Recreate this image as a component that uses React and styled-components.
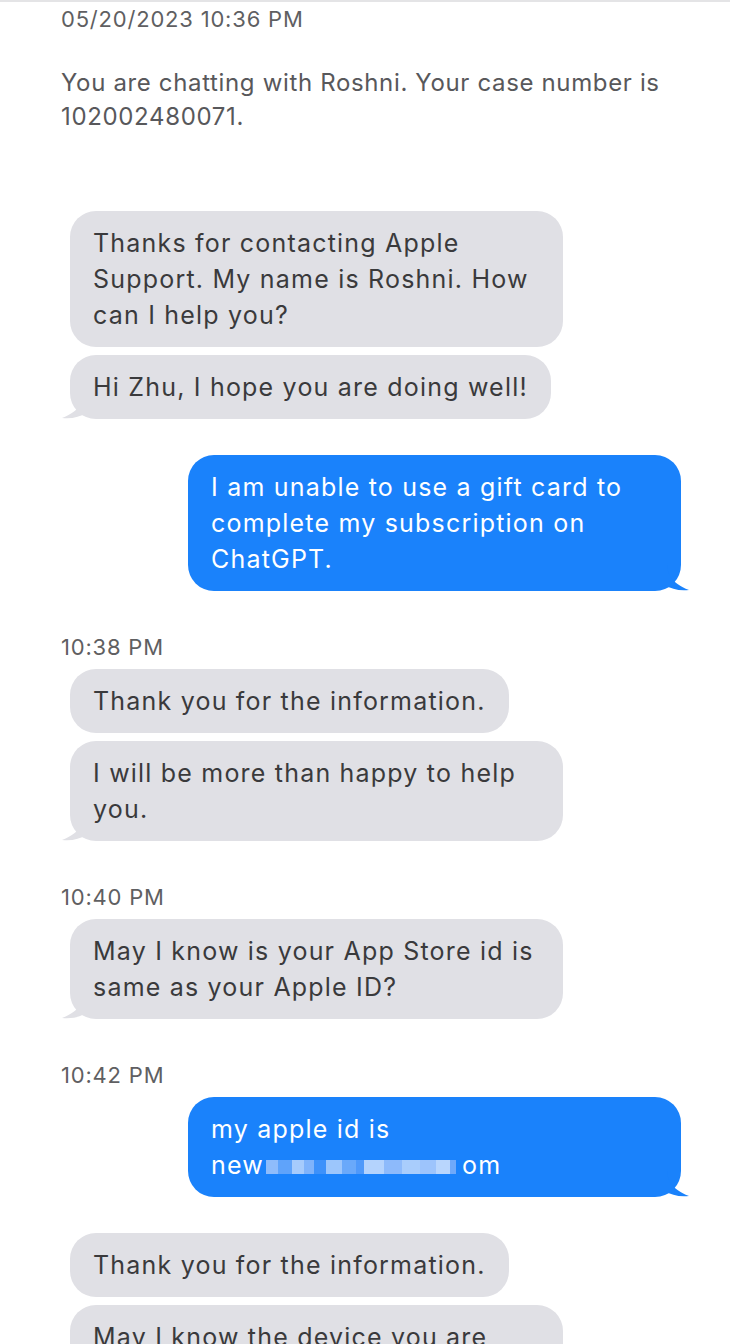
import React from "react";
import styled, { createGlobalStyle } from "styled-components";

const GlobalStyle = createGlobalStyle`
  html, body {
    margin: 0;
    padding: 0;
    background: #ffffff;
  }
  body {
    font-family: "Inter", "Noto Sans", sans-serif;
    -webkit-font-smoothing: antialiased;
  }
`;

const mosaic = [
  ["#8fbcfb", 12],
  ["#5fa3fa", 14],
  ["#a6cbfc", 12],
  ["#7fb3fb", 10],
  ["#3d91fa", 12],
  ["#9cc6fc", 16],
  ["#6aa9fa", 14],
  ["#4f99fa", 8],
  ["#b4d3fd", 20],
  ["#8dbafb", 18],
  ["#a9cdfc", 18],
  ["#9dc4fc", 16],
  ["#b9d6fd", 14],
  ["#6fa9fa", 6],
];

function GreyTail() {
  return (
    <TailIn width="30" height="28" viewBox="0 0 30 28">
      <path
        d="M24 0 C24 10 20 20 2 27 C12 28 20 26 26 22 C28 23 30 24 30 24 L30 0 Z"
        fill="#e0e0e5"
      />
    </TailIn>
  );
}

function BlueTail() {
  return (
    <TailOut width="30" height="28" viewBox="0 0 30 28">
      <path
        d="M6 0 C6 10 10 20 28 27 C18 28 10 26 4 22 C2 23 0 24 0 24 L0 0 Z"
        fill="#1a82fb"
      />
    </TailOut>
  );
}

export default function App() {
  return (
    <>
      <GlobalStyle />
      <Page>
        <Intro>
          <Stamp>05/20/2023 10:36 PM</Stamp>
          <CaseNote>
            You are chatting with Roshni. Your case number is 102002480071.
          </CaseNote>
        </Intro>

        <Group>
          <Bubble>
            Thanks for contacting Apple Support. My name is Roshni. How can I
            help you?
          </Bubble>
          <Bubble>
            Hi Zhu, I hope you are doing well!
            <GreyTail />
          </Bubble>
        </Group>

        <Group $top={36}>
          <Bubble $out>
            I am unable to use a gift card to complete my subscription on
            ChatGPT.
            <BlueTail />
          </Bubble>
        </Group>

        <Group $top={44}>
          <Stamp>10:38 PM</Stamp>
          <Bubble>Thank you for the information.</Bubble>
          <Bubble>
            I will be more than happy to help you.
            <GreyTail />
          </Bubble>
        </Group>

        <Group $top={44}>
          <Stamp>10:40 PM</Stamp>
          <Bubble>
            May I know is your App Store id is same as your Apple ID?
            <GreyTail />
          </Bubble>
        </Group>

        <Group $top={44}>
          <Stamp>10:42 PM</Stamp>
          <Bubble $out $wide>
            my apple id is
            <br />
            new
            <Mosaic>
              {mosaic.map(([c, w], i) => (
                <Tile key={i} style={{ background: c, width: w }} />
              ))}
            </Mosaic>
            om
            <BlueTail />
          </Bubble>
        </Group>

        <Group $top={36}>
          <Bubble>Thank you for the information.</Bubble>
          <Bubble>May I know the device you are using?</Bubble>
        </Group>
      </Page>
    </>
  );
}

const Page = styled.div`
  width: 730px;
  height: 1344px;
  overflow: hidden;
  border-top: 2px solid #e4e4e6;
  box-sizing: border-box;
  padding: 3px 50px 0 61px;
  display: flex;
  flex-direction: column;
`;

const Intro = styled.div`
  display: flex;
  flex-direction: column;
  gap: 33px;
  margin-bottom: 77px;
`;

const Stamp = styled.div`
  font-size: 22px;
  line-height: 28px;
  letter-spacing: 0.8px;
  color: #5f5f62;
`;

const CaseNote = styled.div`
  font-size: 24px;
  line-height: 34px;
  letter-spacing: 0.65px;
  color: #58585b;
  max-width: 610px;
`;

const Group = styled.div`
  display: flex;
  flex-direction: column;
  gap: 8px;
  margin-top: ${(p) => p.$top || 0}px;
  ${Stamp} {
    margin-top: -2px;
    margin-bottom: 0;
  }
`;

const Bubble = styled.div`
  position: relative;
  box-sizing: border-box;
  max-width: 493px;
  width: ${(p) => (p.$wide ? "493px" : "auto")};
  margin-left: ${(p) => (p.$out ? "0" : "9px")};
  margin-right: ${(p) => (p.$out ? "-1px" : "0")};
  align-self: ${(p) => (p.$out ? "flex-end" : "flex-start")};
  padding: 14px 23px;
  border-radius: 26px;
  font-size: 25px;
  line-height: 36px;
  letter-spacing: 1.2px;
  background: ${(p) => (p.$out ? "#1a82fb" : "#e0e0e5")};
  color: ${(p) => (p.$out ? "#ffffff" : "#3a3a3c")};
`;

const TailIn = styled.svg`
  position: absolute;
  left: -10px;
  bottom: 0;
`;

const TailOut = styled.svg`
  position: absolute;
  right: -10px;
  bottom: 0;
`;

const Mosaic = styled.span`
  display: inline-flex;
  vertical-align: middle;
  height: 14px;
  margin: 0 6px 0 2px;
`;

const Tile = styled.span`
  display: inline-block;
  height: 100%;
`;
